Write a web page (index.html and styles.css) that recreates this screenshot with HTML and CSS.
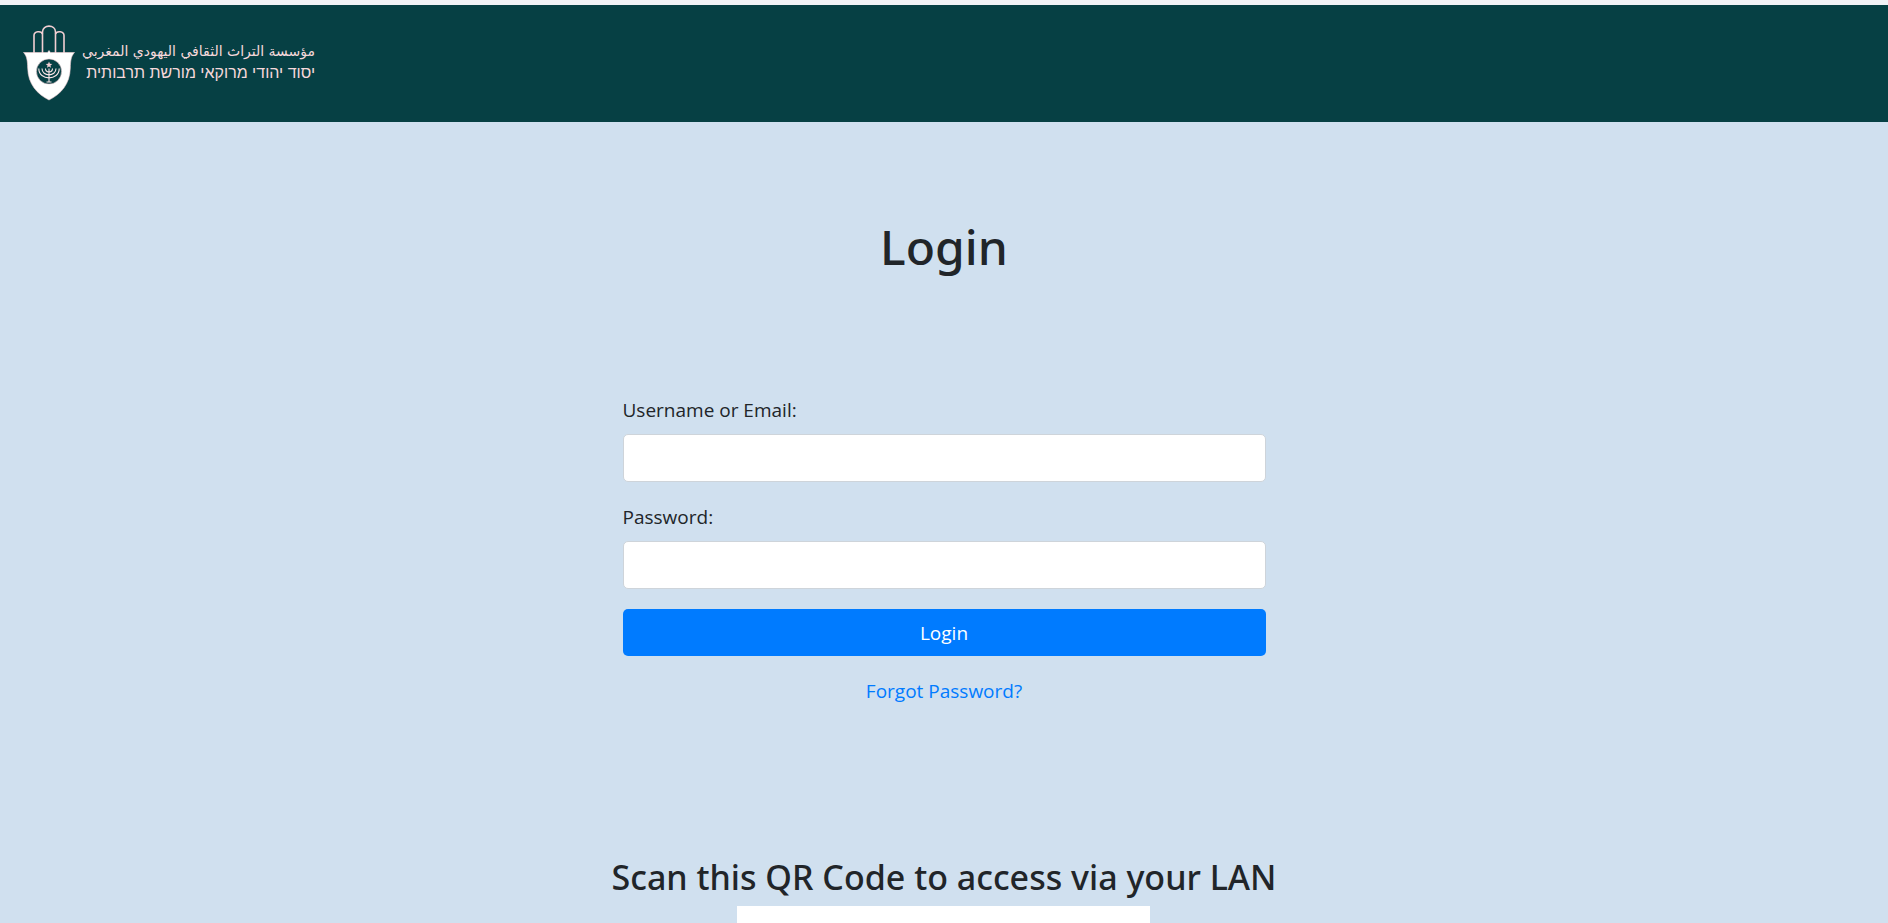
FILE: index.html
```html
<!DOCTYPE html>
<html lang="en">
<head>
<meta charset="utf-8">
<meta name="viewport" content="width=device-width, initial-scale=1">
<title>Login</title>
<link rel="stylesheet" href="styles.css">
</head>
<body>
<header class="site-header">
  <a class="brand" href="#">
    <svg class="brand-mark" viewBox="0 0 52 76" aria-hidden="true">
      <g fill="none" stroke="#f2cfd3" stroke-width="1.6">
        <path d="M11 28V10.500C11 6 18.500 5.500 19.500 9M41 28V10.500C41 6 33.500 5.500 32.500 9"/>
        <path d="M19.500 28V7C19.500-.8 32.500-.8 32.500 7V28"/>
      </g>
      <path fill="#fff" stroke="#f2cfd3" stroke-width=".6" d="M.5 27.500H24.500L26 25.500L27.500 27.500H51.500C48 31 47.500 36 47.300 43C47 59 38 69 26 75C14 69 5 59 4.700 43C4.500 36 4 31 .5 27.500Z"/>
      <circle cx="26" cy="46.500" r="12.600" fill="#064044" stroke="#f2cfd3" stroke-width=".6"/>
      <path fill="#f2cfd3" d="M26 36.500L26.900 38.800L29.300 38.900L27.400 40.400L28.100 42.700L26 41.400L23.900 42.700L24.600 40.400L22.700 38.900L25.100 38.800Z"/>
      <path fill="none" stroke="#f9e6e8" stroke-width="1.100" d="M26 43.500V56.500M22.500 43.500C22.500 48 29.500 48 29.500 43.500M19 43.500C19 52 33 52 33 43.500M15.800 43.500C15.800 56 36.200 56 36.200 43.500M23.500 57H28.500"/>
    </svg>
    <span class="brand-name">
      <span class="brand-arabic" lang="ar" dir="rtl">مؤسسة التراث الثقافي اليهودي المغربي</span>
      <span class="brand-hebrew" lang="he" dir="rtl">יסוד יהודי מרוקאי מורשת תרבותית</span>
    </span>
  </a>
</header>
<main class="page">
  <h1 class="title">Login</h1>
  <form class="login-form">
    <div class="field">
      <label for="username">Username or Email:</label>
      <input id="username" type="text" name="username">
    </div>
    <div class="field">
      <label for="password">Password:</label>
      <input id="password" type="password" name="password">
    </div>
    <button class="submit" type="submit">Login</button>
    <a class="forgot" href="#">Forgot Password?</a>
  </form>
  <section class="lan">
    <h2 class="lan-title">Scan this QR Code to access via your LAN</h2>
    <div class="qr-panel"></div>
  </section>
</main>
</body>
</html>
```
FILE: styles.css
```css
* { box-sizing: border-box; }
body {
  margin: 0;
  min-height: 100vh;
  display: flex;
  flex-direction: column;
  border-top: 5px solid #f1f3f6;
  background: #d0e0ef;
  color: #212529;
  font: 19px/30px "Segoe UI", "Open Sans", sans-serif;
}
.site-header {
  padding: 20px 23px;
  background: #064044;
}
.brand {
  display: flex;
  width: max-content;
  gap: 7px;
  height: 77px;
  text-decoration: none;
  color: #f6d9dc;
}
.brand-mark { width: 52px; height: 76px; }
.brand-name {
  display: flex;
  flex-direction: column;
  padding-top: 15px;
  white-space: nowrap;
}
.brand-arabic {
  font: 14px/22px "DejaVu Sans", sans-serif;
}
.brand-hebrew {
  font: 16px/22px "Liberation Sans", sans-serif;
}
.page {
  flex: 1;
  display: flex;
  flex-direction: column;
  align-items: center;
  padding-top: 95px;
}
.title,
.lan-title {
  font-family: "Segoe UI", "Noto Sans", sans-serif;
  font-weight: 500;
}
.title {
  margin: 0 0 118px;
  font-size: 48px;
  line-height: 60px;
}
.login-form {
  display: flex;
  flex-direction: column;
  gap: 20px;
  width: 100%;
  max-width: 643px;
}
.field {
  display: flex;
  flex-direction: column;
  gap: 9px;
}
.field input {
  width: 100%;
  height: 48px;
  padding: 8px 15px;
  border: 1px solid #ced4da;
  border-radius: 5px;
  background: #fff;
  color: #495057;
  font: inherit;
}
.submit {
  height: 47px;
  border: 0;
  border-radius: 5px;
  background: #007bff;
  color: #fff;
  font: inherit;
}
.forgot {
  align-self: center;
  color: #007bff;
  text-decoration: none;
}
.lan {
  flex: 1;
  display: flex;
  flex-direction: column;
  align-items: center;
  margin-top: 150px;
}
.lan-title {
  margin: 0 0 8px;
  font-size: 34px;
  line-height: 42px;
}
.qr-panel {
  flex: 1;
  width: 413px;
  max-width: 100%;
  background: #fff;
}
```
